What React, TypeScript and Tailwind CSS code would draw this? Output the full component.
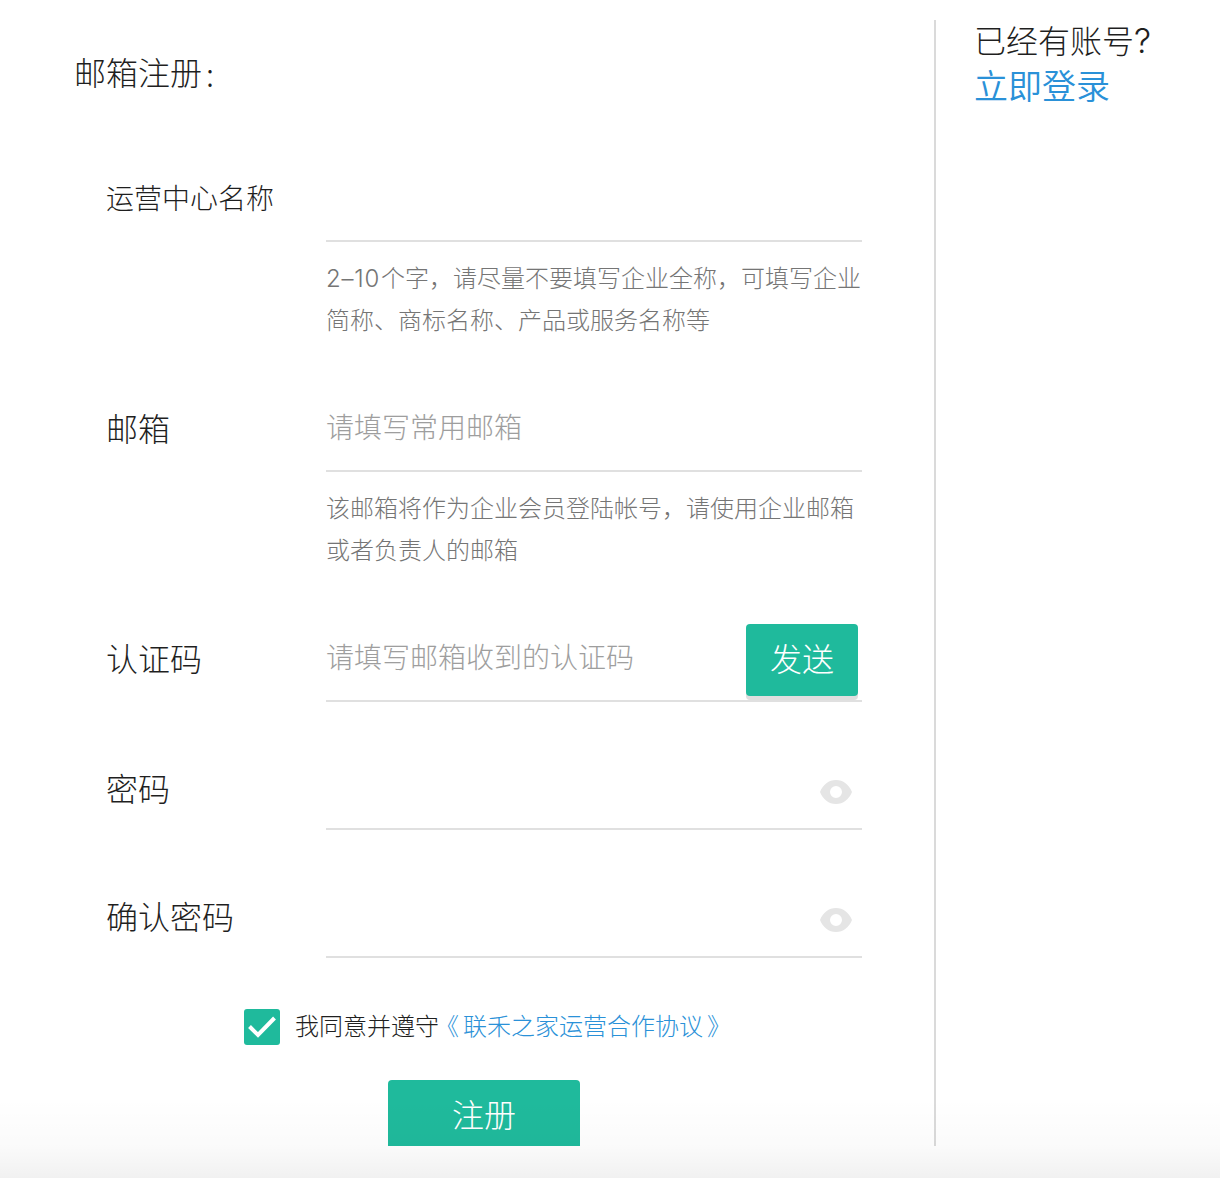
import React, { useState } from 'react';

interface FormRowI {
  label: string;
  labelClass?: string;
  placeholder?: string;
  hint?: React.ReactNode;
  className?: string;
  children?: React.ReactNode;
}

function FormRow({
  label,
  labelClass = 'pb-[2px] text-[32px]',
  placeholder,
  hint,
  className,
  children,
}: FormRowI) {
  return (
    <div className={className}>
      <div className="flex">
        <label
          className={`w-[220px] h-[88px] flex items-center text-[#1f1f1f] ${labelClass}`}
        >
          {label}
        </label>
        <div className="w-[536px] h-[88px] flex items-center border-b-2 border-[#e0e0e0]">
          <span className="flex-1 pb-[2px] text-[28px] text-[#9e9e9e]">
            {placeholder}
          </span>
          {children}
        </div>
      </div>
      {hint && (
        <p className="ml-[220px] mt-[14px] w-[560px] text-2xl leading-[42px] text-[#757575]">
          {hint}
        </p>
      )}
    </div>
  );
}

function EyeIcon() {
  return (
    <svg viewBox="0 0 32 24" className="w-8 h-6 mr-2.5 mt-[13px]">
      <path
        fill="#e5e5e5"
        fillRule="evenodd"
        d="M16 0C8.800 0 3 4.500 0 12c3 7.500 8.800 12 16 12s13-4.500 16-12C29 4.500 23.200 0 16 0Zm0 18a6 6 0 1 1 0-12 6 6 0 0 1 0 12Z"
      />
    </svg>
  );
}

function App() {
  const [agreed, setAgreed] = useState(true);

  return (
    <div className="relative w-[1220px] h-[1178px] bg-white overflow-hidden font-['Noto_Sans_CJK_SC',sans-serif] font-light">
      <div className="flex h-[1146px] overflow-hidden">
        {/* register form */}
        <div className="w-[936px] mt-5 shrink-0 pl-[106px] border-r-2 border-[#dadada]">
          <h1 className="-ml-8 h-[106px] pb-1 mb-7 flex items-center text-[32px] text-[#1f1f1f]">
            邮箱注册
            <span className="ml-1 pt-1">:</span>
          </h1>
          <FormRow
            label="运营中心名称"
            labelClass="pb-[2px] text-[28px]"
            hint={
              <>
                <span className="inline-block w-[55px] leading-none font-['Inter',sans-serif] tracking-[0.8px]">
                  2–10
                </span>
                个字，请尽量不要填写企业全称，可填写企业
                <br />
                简称、商标名称、产品或服务名称等
              </>
            }
          />
          <FormRow
            className="mt-11"
            label="邮箱"
            placeholder="请填写常用邮箱"
            hint={
              <>
                该邮箱将作为企业会员登陆帐号，请使用企业邮箱
                <br />
                或者负责人的邮箱
              </>
            }
          />
          <FormRow
            className="mt-11"
            label="认证码"
            placeholder="请填写邮箱收到的认证码"
          >
            <button className="w-28 h-[72px] mr-1 mt-1.5 pb-1.5 rounded bg-[#1fba9c] text-[32px] text-white shadow-[0_4px_0_#dfdfdf]">
              发送
            </button>
          </FormRow>
          <FormRow
            className="mt-10"
            label="密码"
            labelClass="pt-px text-[32px]"
          >
            <EyeIcon />
          </FormRow>
          <FormRow
            className="mt-10"
            label="确认密码"
            labelClass="pt-px text-[32px]"
          >
            <EyeIcon />
          </FormRow>

          {/* agreement */}
          <div className="ml-[138px] mt-[51px] h-9 flex items-center text-2xl">
            <button
              className="w-9 h-9 mr-[15px] rounded-[3px] bg-[#1fba9c]"
              onClick={() => setAgreed(!agreed)}
            >
              {agreed && (
                <svg viewBox="0 0 36 36" className="w-9 h-9">
                  <path
                    d="M5.500 17.500 14 26 30.500 9"
                    fill="none"
                    stroke="#fff"
                    strokeWidth="4"
                  />
                </svg>
              )}
            </button>
            <span className="pb-1 text-[#1f1f1f]">我同意并遵守</span>
            <a className="pb-1 text-[#2a91d8]">
              <span className="ml-2 mr-1 [font-feature-settings:'halt']">
                《
              </span>
              联禾之家运营合作协议
              <span className="ml-1 [font-feature-settings:'halt']">》</span>
            </a>
          </div>

          <button className="block ml-[282px] mt-[35px] w-48 h-[72px] pb-1.5 rounded bg-[#1fba9c] text-[32px] text-white">
            注册
          </button>
        </div>

        {/* login link */}
        <div className="pt-4 pl-[38px] text-[#1f1f1f]">
          <p className="text-[32px] leading-[46px]">
            已经有账号
            <span className="font-['Inter',sans-serif] text-[34px]">?</span>
          </p>
          <a className="block text-[34px] leading-[42px] font-[350] text-[#2a91d8]">
            立即登录
          </a>
        </div>
      </div>
      {/* bottom fade */}
      <div className="absolute inset-x-0 bottom-0 h-20 bg-linear-to-b from-black/0 via-black/[0.018] via-60% to-black/[0.055] pointer-events-none" />
    </div>
  );
}

export default App;
